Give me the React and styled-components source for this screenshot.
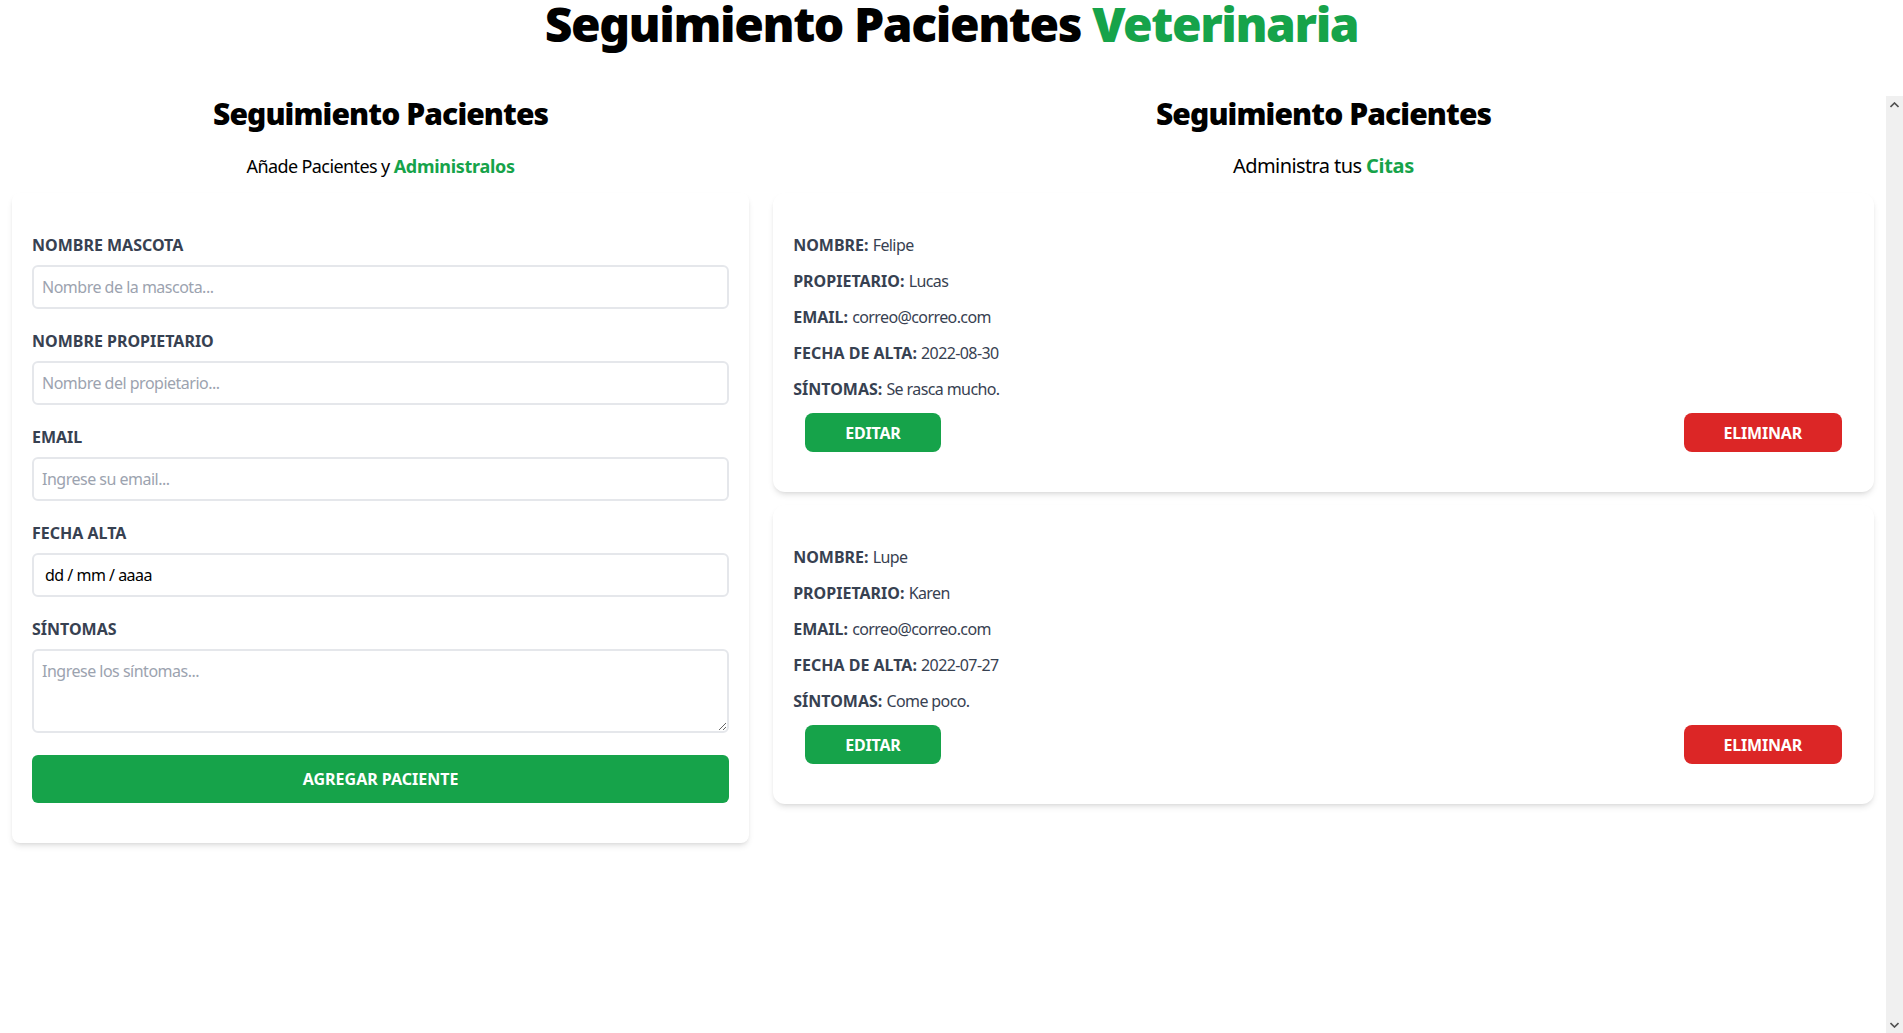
import React from "react";
import styled, { createGlobalStyle } from "styled-components";

const palette = {
  green: "#16a34a",
  red: "#dc2626",
  gray200: "#e5e7eb",
  gray400: "#9ca3af",
  gray700: "#374151",
  track: "#f0f0f0",
  arrow: "#505050",
};

const pacientes = [
  {
    id: 1,
    nombre: "Felipe",
    propietario: "Lucas",
    email: "correo@correo.com",
    fecha: "2022-08-30",
    sintomas: "Se rasca mucho.",
  },
  {
    id: 2,
    nombre: "Lupe",
    propietario: "Karen",
    email: "correo@correo.com",
    fecha: "2022-07-27",
    sintomas: "Come poco.",
  },
];

const Paciente = ({ paciente }) => {
  const rows = [
    ["Nombre", paciente.nombre],
    ["Propietario", paciente.propietario],
    ["Email", paciente.email],
    ["Fecha de alta", paciente.fecha],
    ["Síntomas", paciente.sintomas],
  ];
  return (
    <PacienteCard>
      {rows.map(([label, value]) => (
        <DataRow key={label}>
          {label}: <DataValue>{value}</DataValue>
        </DataRow>
      ))}
      <Actions>
        <ActionButton type="button">Editar</ActionButton>
        <ActionButton type="button" $danger>
          Eliminar
        </ActionButton>
      </Actions>
    </PacienteCard>
  );
};

const Formulario = () => (
  <FormColumn>
    <SectionTitle>Seguimiento Pacientes</SectionTitle>
    <Subtitle $size={18}>
      Añade Pacientes y <Accent>Administralos</Accent>
    </Subtitle>
    <FormCard onSubmit={(e) => e.preventDefault()}>
      <Field>
        <Label htmlFor="mascota">Nombre Mascota</Label>
        <TextInput id="mascota" type="text" placeholder="Nombre de la mascota..." />
      </Field>
      <Field>
        <Label htmlFor="propietario">Nombre Propietario</Label>
        <TextInput id="propietario" type="text" placeholder="Nombre del propietario..." />
      </Field>
      <Field>
        <Label htmlFor="email">Email</Label>
        <TextInput id="email" type="email" placeholder="Ingrese su email..." />
      </Field>
      <Field>
        <Label htmlFor="alta">Fecha Alta</Label>
        <TextInput id="alta" type="text" placeholder="dd / mm / aaaa" $date />
      </Field>
      <Field $gap={22}>
        <Label htmlFor="sintomas">Síntomas</Label>
        <TextArea id="sintomas" placeholder="Ingrese los síntomas..." />
      </Field>
      <SubmitButton type="submit" value="Agregar Paciente" />
    </FormCard>
  </FormColumn>
);

// the list column keeps its own scroll track, as in the original window
const ScrollBar = () => (
  <ScrollTrack>
    <svg width="9" height="6" viewBox="0 0 9 6">
      <path d="M0.5 5 L4.5 1 L8.5 5" fill="none" stroke={palette.arrow} strokeWidth="1.6" />
    </svg>
    <svg width="9" height="6" viewBox="0 0 9 6">
      <path d="M0.5 1 L4.5 5 L8.5 1" fill="none" stroke={palette.arrow} strokeWidth="1.6" />
    </svg>
  </ScrollTrack>
);

const App = () => {
  return (
    <>
      <GlobalStyle />
      <Title>
        Seguimiento Pacientes <Accent>Veterinaria</Accent>
      </Title>
      <Layout>
        <Formulario />
        <ListColumn>
          <ListBody>
            <SectionTitle>Seguimiento Pacientes</SectionTitle>
            <Subtitle $size={20}>
              Administra tus <Accent>Citas</Accent>
            </Subtitle>
            {pacientes.map((p) => (
              <Paciente key={p.id} paciente={p} />
            ))}
          </ListBody>
          <ScrollBar />
        </ListColumn>
      </Layout>
    </>
  );
};

const GlobalStyle = createGlobalStyle`
  *, *::before, *::after {
    box-sizing: border-box;
  }
  html, body {
    margin: 0;
    padding: 0;
  }
  body {
    font-family: "Noto Sans", "Open Sans", sans-serif;
    line-height: 1.5;
    color: #000;
    background: #fff;
    overflow: hidden;
  }
`;

const Title = styled.h1`
  margin: 0;
  font-size: 48px;
  line-height: 1;
  font-weight: 900;
  letter-spacing: -0.03em;
  text-align: center;
`;

const Accent = styled.span`
  color: ${palette.green};
  font-weight: 900;
`;

const Layout = styled.div`
  display: flex;
  margin-top: 48px;
`;

const FormColumn = styled.div`
  width: 40%;
`;

const ListColumn = styled.div`
  display: flex;
  width: 60%;
  height: calc(100vh - 96px);
`;

const ListBody = styled.div`
  flex: 1;
  min-width: 0;
  overflow-y: auto;
`;

const ScrollTrack = styled.div`
  flex: none;
  width: 17px;
  display: flex;
  flex-direction: column;
  align-items: center;
  justify-content: space-between;
  padding: 6px 0 5px;
  background: ${palette.track};
`;

const SectionTitle = styled.h2`
  margin: 0;
  font-size: 30px;
  line-height: 36px;
  font-weight: 900;
  letter-spacing: -0.03em;
  text-align: center;
`;

const Subtitle = styled.p`
  margin: 20px 0 13px;
  font-size: ${(p) => p.$size}px;
  line-height: 28px;
  letter-spacing: -0.6px;
  text-align: center;

  ${Accent} {
    font-weight: 700;
    letter-spacing: -0.3px;
  }
`;

const FormCard = styled.form`
  margin: 0 12px;
  padding: 40px 20px;
  background: #fff;
  border-radius: 8px;
  box-shadow: 0 4px 6px -1px rgb(0 0 0 / 0.1), 0 2px 4px -2px rgb(0 0 0 / 0.1);
`;

const Field = styled.div`
  margin-bottom: ${(p) => p.$gap || 20}px;
`;

const Label = styled.label`
  display: block;
  font-size: 16px;
  font-weight: 700;
  text-transform: uppercase;
  color: ${palette.gray700};
`;

const TextInput = styled.input`
  display: block;
  width: 100%;
  margin-top: 8px;
  padding: ${(p) => (p.$date ? "8px 8px 8px 11px" : "8px")};
  border: 2px solid ${palette.gray200};
  border-radius: 6px;
  font: inherit;
  font-size: 16px;
  line-height: 24px;
  letter-spacing: -0.5px;
  outline: none;

  &::placeholder {
    color: ${(p) => (p.$date ? "#000" : palette.gray400)};
  }
`;

const TextArea = styled.textarea`
  display: block;
  width: 100%;
  height: 84px;
  margin-top: 8px;
  padding: 8px;
  border: 2px solid ${palette.gray200};
  border-radius: 6px;
  font: inherit;
  font-size: 16px;
  line-height: 24px;
  letter-spacing: -0.5px;
  outline: none;

  &::placeholder {
    color: ${palette.gray400};
  }
`;

const SubmitButton = styled.input`
  display: block;
  width: 100%;
  padding: 12px;
  border: none;
  border-radius: 6px;
  background: ${palette.green};
  color: #fff;
  font: inherit;
  font-size: 16px;
  line-height: 24px;
  font-weight: 700;
  text-transform: uppercase;
  cursor: pointer;
`;

const PacienteCard = styled.div`
  margin: 0 12px 13px;
  padding: 40px 20px;
  background: #fff;
  border-radius: 12px;
  box-shadow: 0 4px 6px -1px rgb(0 0 0 / 0.1), 0 2px 4px -2px rgb(0 0 0 / 0.1);
`;

const DataRow = styled.p`
  margin: 0 0 12px;
  font-size: 16px;
  line-height: 24px;
  font-weight: 700;
  text-transform: uppercase;
  color: ${palette.gray700};
`;

const DataValue = styled.span`
  font-weight: 400;
  text-transform: none;
  letter-spacing: -0.6px;
`;

const Actions = styled.div`
  display: flex;
  justify-content: space-between;
  padding: 0 12px;
`;

const ActionButton = styled.button`
  padding: 8px 40px 7px;
  border: none;
  border-radius: 8px;
  background: ${(p) => (p.$danger ? palette.red : palette.green)};
  color: #fff;
  font: inherit;
  font-size: 16px;
  line-height: 24px;
  font-weight: 700;
  letter-spacing: -0.2px;
  text-transform: uppercase;
  cursor: pointer;
`;

export default App;
